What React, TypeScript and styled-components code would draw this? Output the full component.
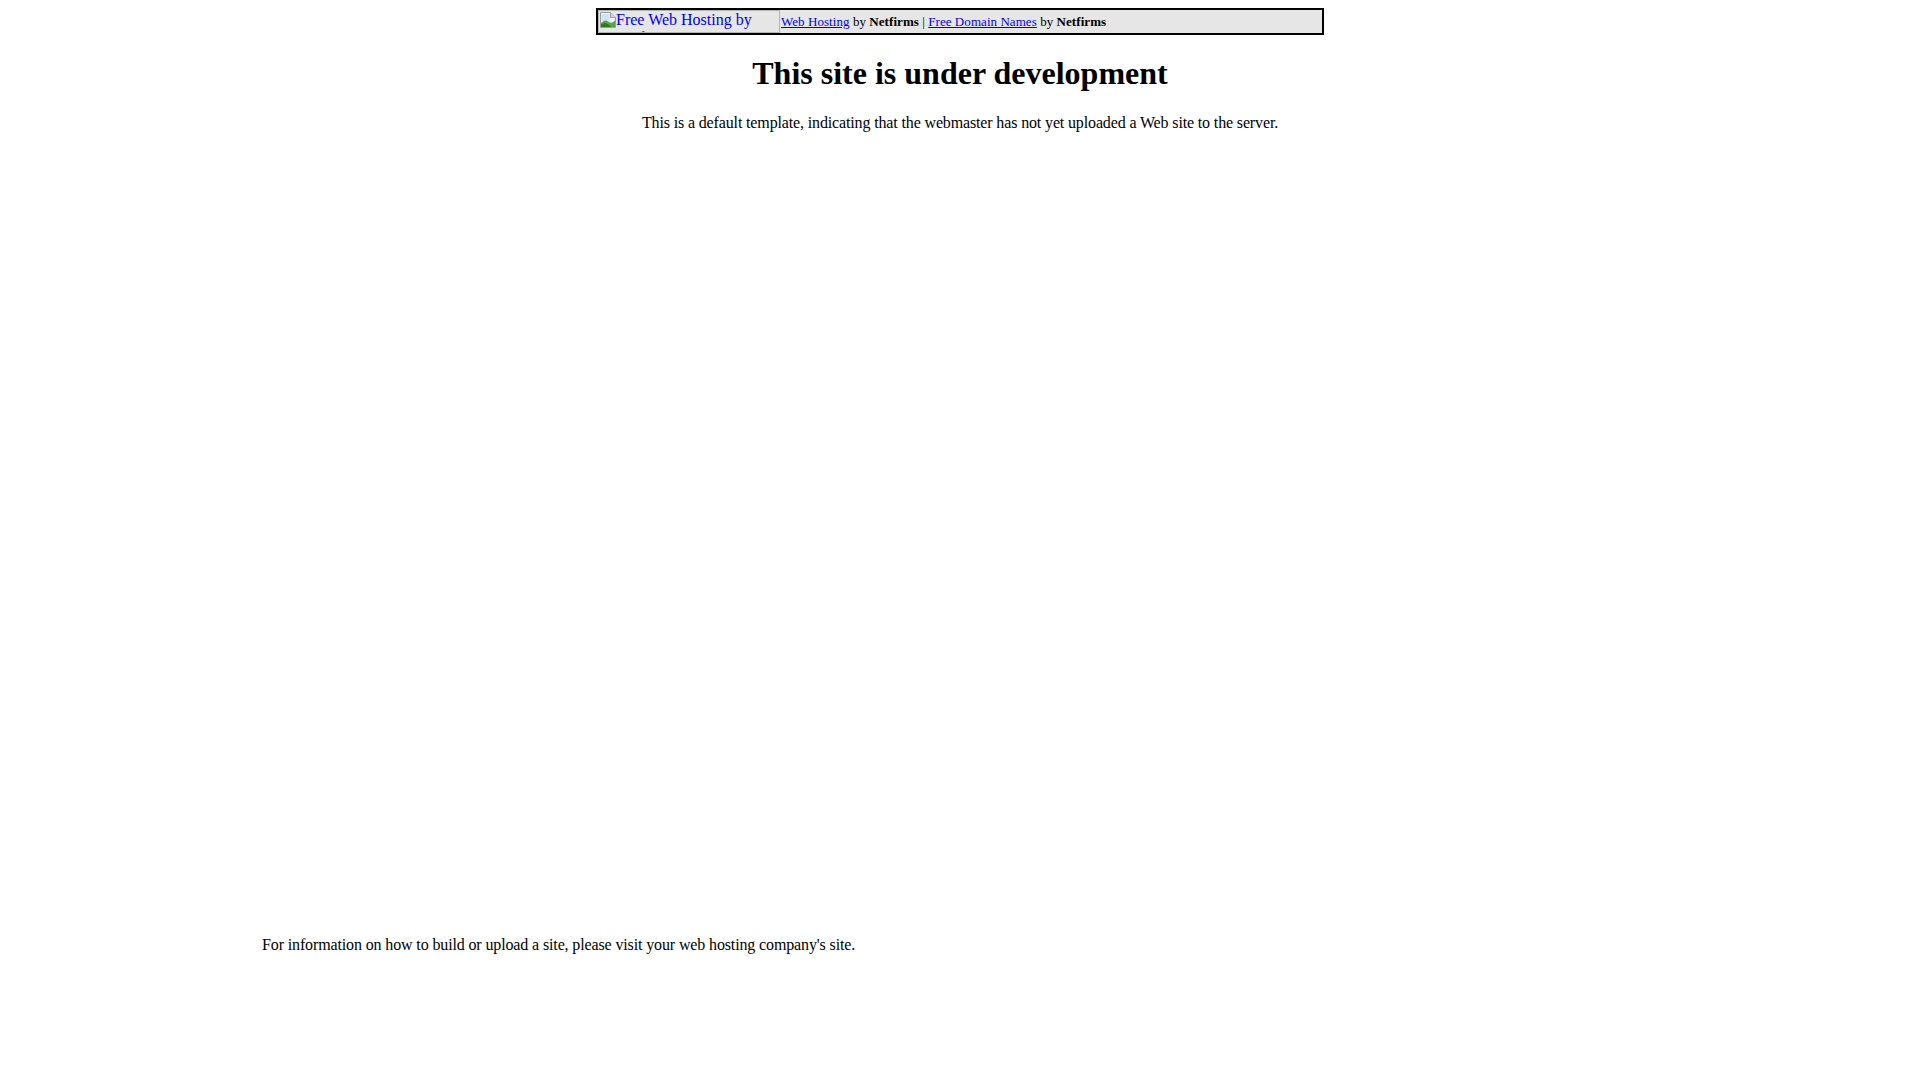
import styled, {createGlobalStyle} from "styled-components";

const GlobalStyle = createGlobalStyle`
  html, body {
    margin: 0;
    padding: 0;
    background: #ffffff;
  }
  body {
    padding: 8px;
    font-family: "Liberation Serif", "Times New Roman", serif;
    font-size: 16px;
    color: #000000;
  }
`

const StyledPage = styled.div`
  display: flex;
  flex-direction: column;
  align-items: center;
`
const StyledBar = styled.div`
  display: flex;
  align-items: stretch;
  width: 728px;
  height: 27px;
  box-sizing: border-box;
  border: 2px solid #000000;
  background: #e6e6e6;
`
const StyledBrokenImage = styled.a`
  display: flex;
  align-items: flex-start;
  width: 182px;
  flex-shrink: 0;
  box-sizing: border-box;
  border: 1px solid #b4b4b4;
  overflow: hidden;
  color: #0000ee;
  text-decoration: none;
  font-size: 16px;
  line-height: 18px;
  padding: 0 0 0 1px;
`
const StyledAltText = styled.span`
  width: 148px;
  margin-top: 0;
`
const StyledBarLinks = styled.div`
  display: flex;
  align-items: center;
  padding-left: 1px;
  font-size: 13px;
  letter-spacing: 0.06px;
  white-space: pre;
`
const StyledLink = styled.a`
  color: #0000ee;
  text-decoration: underline;
`
const StyledTitle = styled.h1`
  font-size: 32px;
  font-weight: bold;
  margin: 20px 0 22px 0;
  text-align: center;
`
const StyledText = styled.p`
  margin: 0 0 16px 0;
  text-align: center;
  line-height: 18px;
  letter-spacing: -0.14px;
`
const StyledSpacer = styled.div`
  height: 772px;
`
const StyledFooter = styled.div`
  width: 1396px;
`
const StyledFooterText = styled.p`
  margin: 16px 0;
  line-height: 18px;
  letter-spacing: -0.13px;
`

const BrokenIcon = () => (
    <svg width="16" height="16" viewBox="0 0 16 16" style={{flexShrink: 0, marginTop: 1}}>
        <path d="M0.5 0.5h10l5 5v10h-15z" fill="#f4f4f4" stroke="#9a9a9a"/>
        <path d="M10.5 0.5v5h5" fill="#dcdcdc" stroke="#9a9a9a"/>
        <rect x="1.5" y="2" width="8" height="7" fill="#cfe3f5"/>
        <path d="M1 15 L1 11 Q5 6.5 9 10 Q11.5 12 15 8.5 L15 15z" fill="#5aa444"/>
        <path d="M1 15 L1 12.5 Q5 9.5 8.5 12.5 L11 15z" fill="#2f7a22"/>
    </svg>
)

export default function App() {
    return (
        <>
            <GlobalStyle/>
            <StyledPage>
                <StyledBar>
                    <StyledBrokenImage href="#">
                        <BrokenIcon/>
                        <StyledAltText>Free Web Hosting by Netfirms</StyledAltText>
                    </StyledBrokenImage>
                    <StyledBarLinks>
                        <StyledLink href="#">Web Hosting</StyledLink>
                        {" by "}<b>Netfirms</b>{" | "}
                        <StyledLink href="#">Free Domain Names</StyledLink>
                        {" by "}<b>Netfirms</b>
                    </StyledBarLinks>
                </StyledBar>
                <StyledTitle>This site is under development</StyledTitle>
                <StyledText>
                    This is a default template, indicating that the webmaster has not yet uploaded a Web site to the server.
                </StyledText>
                <StyledSpacer/>
                <StyledFooter>
                    <StyledFooterText>
                        For information on how to build or upload a site, please visit your web hosting company's site.
                    </StyledFooterText>
                </StyledFooter>
            </StyledPage>
        </>
    )
}
